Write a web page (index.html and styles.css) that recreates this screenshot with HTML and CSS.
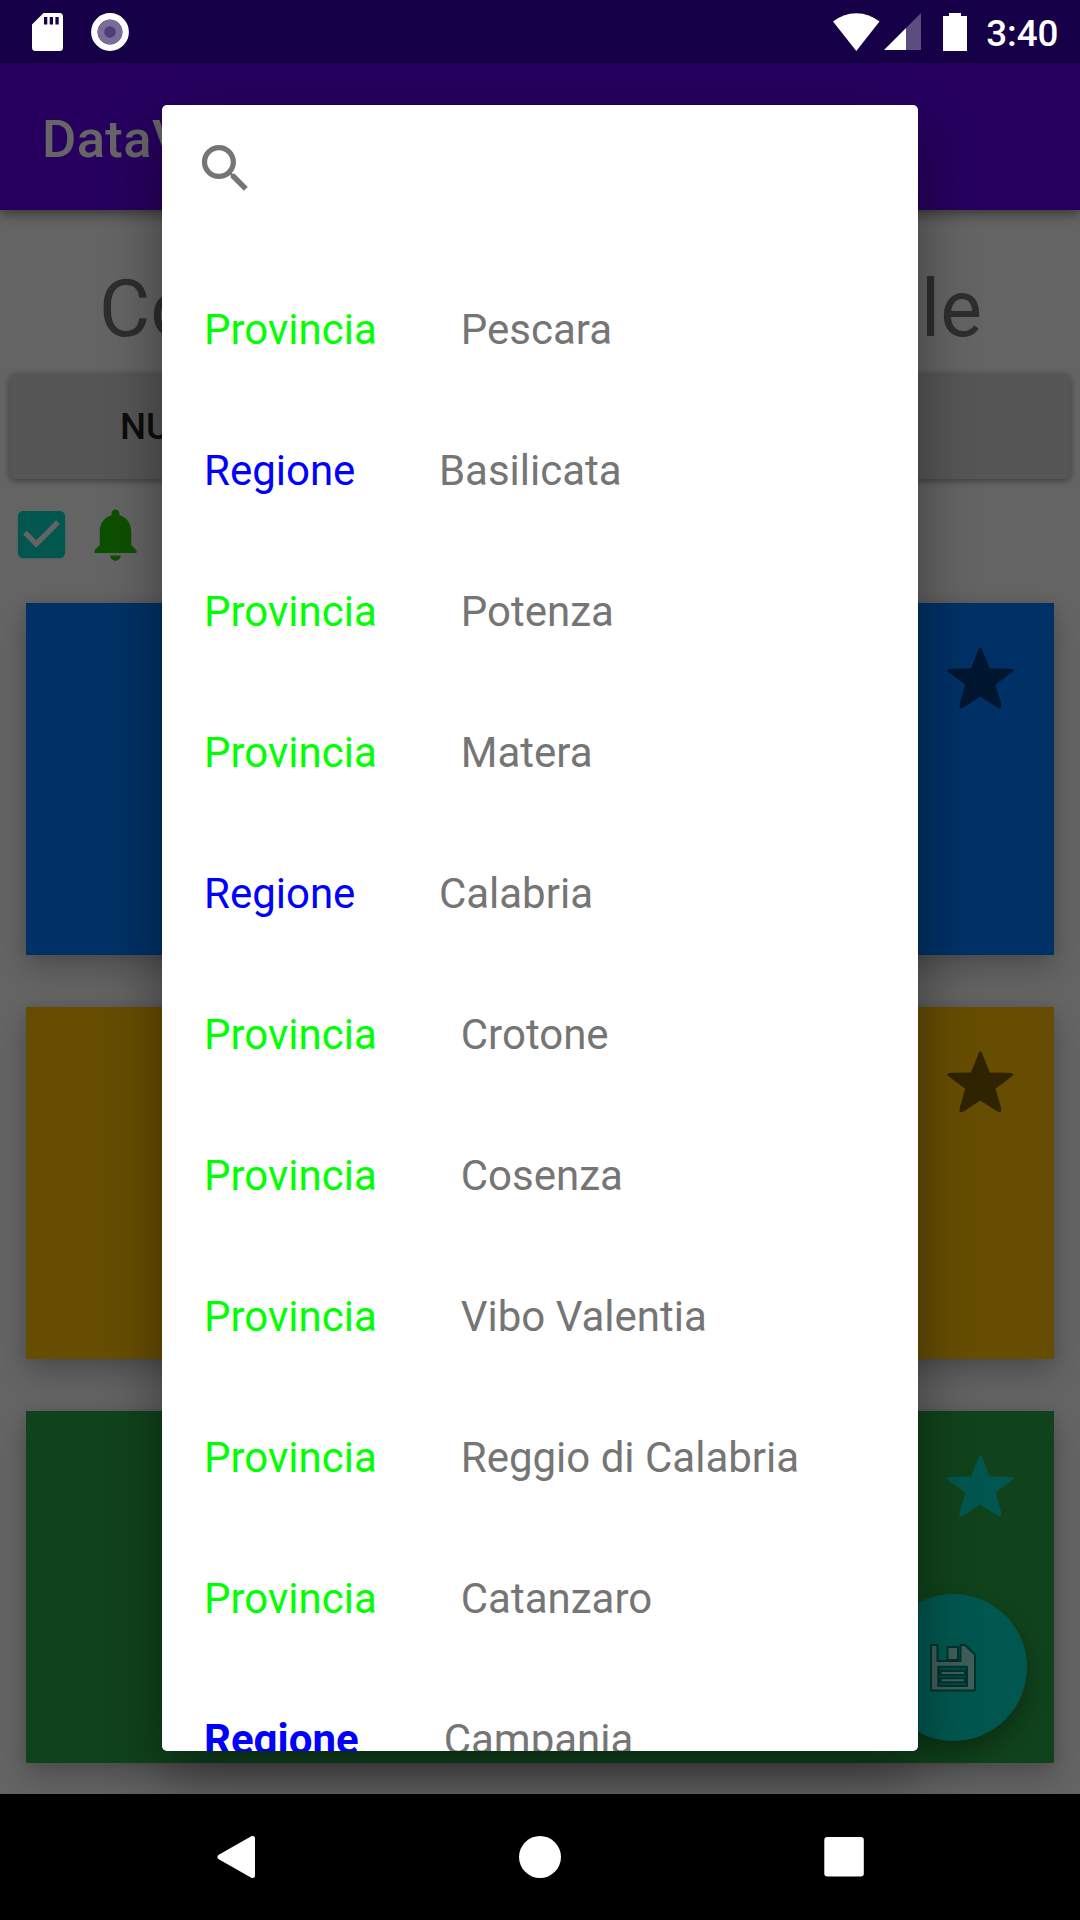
FILE: index.html
```html
<!DOCTYPE html>
<html lang="it">
<head>
<meta charset="utf-8">
<title>DataV</title>
<link rel="stylesheet" href="styles.css">
</head>
<body>
<div class="screen">
  <div class="status-space"></div>
  <header class="app-bar">DataV</header>
  <main class="content">
    <h1 class="title"><span>Co</span><span>le</span></h1>
    <button class="wide-button">NU</button>
    <div class="toggles">
      <svg class="icon check" viewBox="0 0 24 24"><path d="M19 3H5c-1.1 0-2 .9-2 2v14c0 1.1.9 2 2 2h14c1.1 0 2-.9 2-2V5c0-1.1-.9-2-2-2zm-9 14l-5-5 1.4-1.4 3.6 3.6 7.6-7.6L19 8l-9 9z"/></svg>
      <svg class="icon bell" viewBox="0 0 24 24"><path d="M12 22c1.1 0 2-.9 2-2h-4c0 1.1.9 2 2 2zm6-6v-5c0-3.07-1.64-5.64-4.5-6.32V4c0-.83-.67-1.5-1.5-1.5s-1.5.67-1.5 1.5v.68C7.63 5.36 6 7.92 6 11v5l-2 2v1h16v-1l-2-2z"/></svg>
    </div>
    <section class="cards">
      <article class="card blue"><svg class="star" viewBox="0 0 67 62"><path d="M33.3 0.3Q34.3 0.5 35 2L42.7 21.5L61 21.7Q66 22 66.4 23.3Q66 25 62 27.5L48.5 37.8L53.6 55Q54.6 60 53.8 61.2Q52 61.5 48 59L33.3 49.5L19 59Q15 61.5 13 61.2Q12 60 13.2 55L18.2 37.8L4.5 27.5Q.5 25 0.2 23.3Q.7 22 5.5 21.7L24 21.5L31.7 2Q32.4.5 33.3.3Z"/></svg></article>
      <article class="card amber"><svg class="star" viewBox="0 0 67 62"><path d="M33.3 0.3Q34.3 0.5 35 2L42.7 21.5L61 21.7Q66 22 66.4 23.3Q66 25 62 27.5L48.5 37.8L53.6 55Q54.6 60 53.8 61.2Q52 61.5 48 59L33.3 49.5L19 59Q15 61.5 13 61.2Q12 60 13.2 55L18.2 37.8L4.5 27.5Q.5 25 0.2 23.3Q.7 22 5.5 21.7L24 21.5L31.7 2Q32.4.5 33.3.3Z"/></svg></article>
      <article class="card green"><svg class="star on" viewBox="0 0 67 62"><path d="M33.3 0.3Q34.3 0.5 35 2L42.7 21.5L61 21.7Q66 22 66.4 23.3Q66 25 62 27.5L48.5 37.8L53.6 55Q54.6 60 53.8 61.2Q52 61.5 48 59L33.3 49.5L19 59Q15 61.5 13 61.2Q12 60 13.2 55L18.2 37.8L4.5 27.5Q.5 25 0.2 23.3Q.7 22 5.5 21.7L24 21.5L31.7 2Q32.4.5 33.3.3Z"/></svg></article>
    </section>
  </main>
  <div class="fab">
    <svg class="floppy" viewBox="0 0 48 50">
      <path class="body" d="M3 2H8.500V18H31.500V2H36L46 11.500V46Q46 47.500 45 47.500H3Q2 47.500 2 46V3Q2 2 3 2Z"/>
      <path class="body" d="M18.500 4H29V17H18.500Z"/>
      <path class="label" d="M9.300 23.700H38V43H9.300Z"/>
      <path class="line" d="M12 30H35.5M12 37.3H35.5"/>
      <path class="fill-line" d="M12.500 30H35M12.500 37.3H35"/>
    </svg>
  </div>
  <div class="scrim"></div>

  <div class="status-bar">
    <svg class="sd" viewBox="0 0 32 38"><path fill-rule="evenodd" d="M11.5 0H27.5Q31 0 31 3.5V34.5Q31 38 27.5 38H3.5Q0 38 0 34.5V11.5ZM12 4V11.5H15.3V4ZM17.7 4V11.5H21V4ZM23.4 4V11.5H26.7V4Z"/></svg>
    <svg class="record" viewBox="0 0 38 38"><circle cx="19" cy="19" r="15.6" class="ring"/><circle cx="19" cy="19" r="12.5" class="mid"/><circle cx="19" cy="19" r="5.8" class="dot"/></svg>
    <svg class="wifi" viewBox="0 0 47 38"><path d="M0 8.6Q10 .4 23.3.2Q36.500.4 46.500 8.600L23.3 38Z"/></svg>
    <svg class="signal" viewBox="0 0 37 37"><path opacity=".3" d="M22 37V15L37 0V37Z"/><path d="M0 37L22 15V37Z"/></svg>
    <svg class="battery" viewBox="0 0 24 38"><path d="M6 0H18V3H24V38H0V3H6Z"/></svg>
    <span class="clock">3:40</span>
  </div>

  <div class="dialog">
    <div class="search"><svg class="icon" viewBox="0 0 24 24"><path d="M15.500 14h-.79l-.28-.27C15.410 12.590 16 11.110 16 9.500 16 5.910 13.090 3 9.500 3S3 5.910 3 9.500 5.910 16 9.500 16c1.610 0 3.090-.59 4.230-1.570l.27.28v.79l5 4.990L20.490 19l-4.990-5zm-6 0C7.010 14 5 11.990 5 9.500S7.010 5 9.500 5 14 7.010 14 9.500 11.990 14 9.500 14z"/></svg></div>
    <ul class="list">
      <li><span class="prov">Provincia</span><span>Pescara</span></li>
      <li><span class="reg">Regione</span><span>Basilicata</span></li>
      <li><span class="prov">Provincia</span><span>Potenza</span></li>
      <li><span class="prov">Provincia</span><span>Matera</span></li>
      <li><span class="reg">Regione</span><span>Calabria</span></li>
      <li><span class="prov">Provincia</span><span>Crotone</span></li>
      <li><span class="prov">Provincia</span><span>Cosenza</span></li>
      <li><span class="prov">Provincia</span><span>Vibo Valentia</span></li>
      <li><span class="prov">Provincia</span><span>Reggio di Calabria</span></li>
      <li><span class="prov">Provincia</span><span>Catanzaro</span></li>
      <li><span class="reg strong">Regione</span><span>Campania</span></li>
    </ul>
  </div>

  <nav class="nav-bar">
    <svg viewBox="0 0 42 42"><path class="back" d="M37.500 2.500V39.500L5 21Z"/></svg>
    <svg viewBox="0 0 42 42"><circle cx="21" cy="21" r="21"/></svg>
    <svg viewBox="0 0 42 42"><rect x="1.300" y="1" width="39.500" height="39.500" rx="3"/></svg>
  </nav>
</div>
</body>
</html>
```
FILE: styles.css
```css
* { box-sizing: border-box; }

body {
  margin: 0;
  font-family: Roboto, sans-serif;
}

.screen {
  position: relative;
  display: flex;
  flex-direction: column;
  width: 1080px;
  height: 1920px;
  overflow: hidden;
  background: #fafafa;
}

svg { display: block; flex: none; }
.icon { width: 63px; height: 63px; }

.status-space { height: 63px; background: #3700b3; }

.app-bar {
  display: flex;
  align-items: center;
  height: 147px;
  padding: 4px 42px 0;
  background: #6200ee;
  color: #fff;
  font-size: 52.5px;
  font-weight: 500;
  letter-spacing: .4px;
  box-shadow: 0 4px 12px rgba(0, 0, 0, .45);
  z-index: 1;
}

.content {
  flex: 1;
  display: flex;
  flex-direction: column;
  min-height: 0;
}

.title {
  display: flex;
  justify-content: space-between;
  margin: 53px 98px 0 99px;
  font-size: 78.75px;
  line-height: 92px;
  font-weight: 400;
  color: rgba(0, 0, 0, .54);
}

.wide-button {
  height: 106px;
  margin: 17.5px 10px 0;
  padding: 2px 0 0 110px;
  border: 0;
  border-radius: 5px;
  background: #d6d7d7;
  text-align: left;
  font: 500 36.75px Roboto, sans-serif;
  color: rgba(0, 0, 0, .87);
  box-shadow: 0 2px 7px rgba(0, 0, 0, .4);
}

.toggles {
  display: flex;
  gap: 10.5px;
  margin-top: 24.5px;
  padding-left: 10px;
}
.check { fill: #03dac5; }
.bell { fill: #21c600; }

.cards {
  display: flex;
  flex-direction: column;
  gap: 52px;
  padding: 37px 26px 0;
}
.card {
  display: flex;
  justify-content: flex-end;
  height: 352px;
  padding: 44px 40.5px 0 0;
  box-shadow: 0 14px 30px rgba(0, 0, 0, .22), 0 0 12px rgba(0, 0, 0, .1);
}
.blue { background: #007bff; }
.amber { background: #ffc107; }
.green { background: #28a745; }
.star { width: 67px; height: 62px; fill: rgba(0, 0, 0, .54); }
.star.on { fill: #03dac5; }

.fab {
  position: absolute;
  left: 880px;
  top: 1594px;
  display: flex;
  align-items: center;
  justify-content: center;
  width: 147px;
  height: 147px;
  padding-right: 1px;
  border-radius: 50%;
  background: #03dac5;
  box-shadow: 0 12px 24px rgba(0, 0, 0, .3);
}
.floppy { width: 48px; height: 50px; }
.floppy path { stroke-linejoin: round; stroke: #007d70; stroke-width: 2; }
.floppy .body { fill: #9ce8df; fill: #a0ebe2; }
.floppy .label { fill: #03b8a6; }
.floppy .line { fill: none; stroke-width: 5.5; stroke-linecap: round; }
.floppy .fill-line { fill: none; stroke: #a0ebe2; stroke-width: 2; }

.scrim {
  position: absolute;
  inset: 0;
  z-index: 2;
  background: rgba(0, 0, 0, .6);
}

.status-bar {
  position: absolute;
  inset: 0 0 auto;
  z-index: 4;
  display: flex;
  align-items: center;
  height: 63px;
  padding: 0 21.5px 0 32px;
  fill: #fff;
  color: #fff;
}
.sd { width: 32px; height: 38px; }
.record { width: 38px; height: 38px; margin-left: 27.5px; }
.ring { fill: none; stroke: #fff; stroke-width: 6.6; }
.mid { fill: #7c6c98; }
.dot { fill: #503f77; }
.status-bar .record { margin-left: 27px; }
.wifi { width: 47px; height: 38px; margin-left: auto; }
.signal { width: 37px; height: 37px; margin-left: 4px; }
.battery { width: 24px; height: 38px; margin-left: 22px; }
.clock {
  margin: 3px 0 0 19.5px;
  font-size: 36.75px;
  font-weight: 500;
}

.dialog {
  position: absolute;
  left: 162px;
  top: 105px;
  z-index: 3;
  width: 756px;
  height: 1646px;
  overflow: hidden;
  border-radius: 5px;
  background: #fff;
  box-shadow: 0 24px 58px rgba(0, 0, 0, .4);
}
.search { height: 154px; padding: 32px 32px 0; fill: #757575; }
.list {
  margin: 0;
  padding: 0 42px;
  list-style: none;
  font-size: 42px;
  color: #757575;
}
.list li {
  display: flex;
  align-items: center;
  height: 141px;
  white-space: nowrap;
}
.prov { margin-right: 84px; color: #0f0; }
.reg { margin-right: 83.5px; color: #00f; }
.strong { margin-right: 85px; font-weight: 700; }

.nav-bar {
  z-index: 5;
  display: flex;
  flex: none;
  align-items: center;
  justify-content: space-between;
  height: 126px;
  padding: 0 215px;
  background: #000;
  fill: #fff;
}
.nav-bar svg { width: 42px; height: 42px; }
.back { stroke: #fff; stroke-width: 5; stroke-linejoin: round; }
```
